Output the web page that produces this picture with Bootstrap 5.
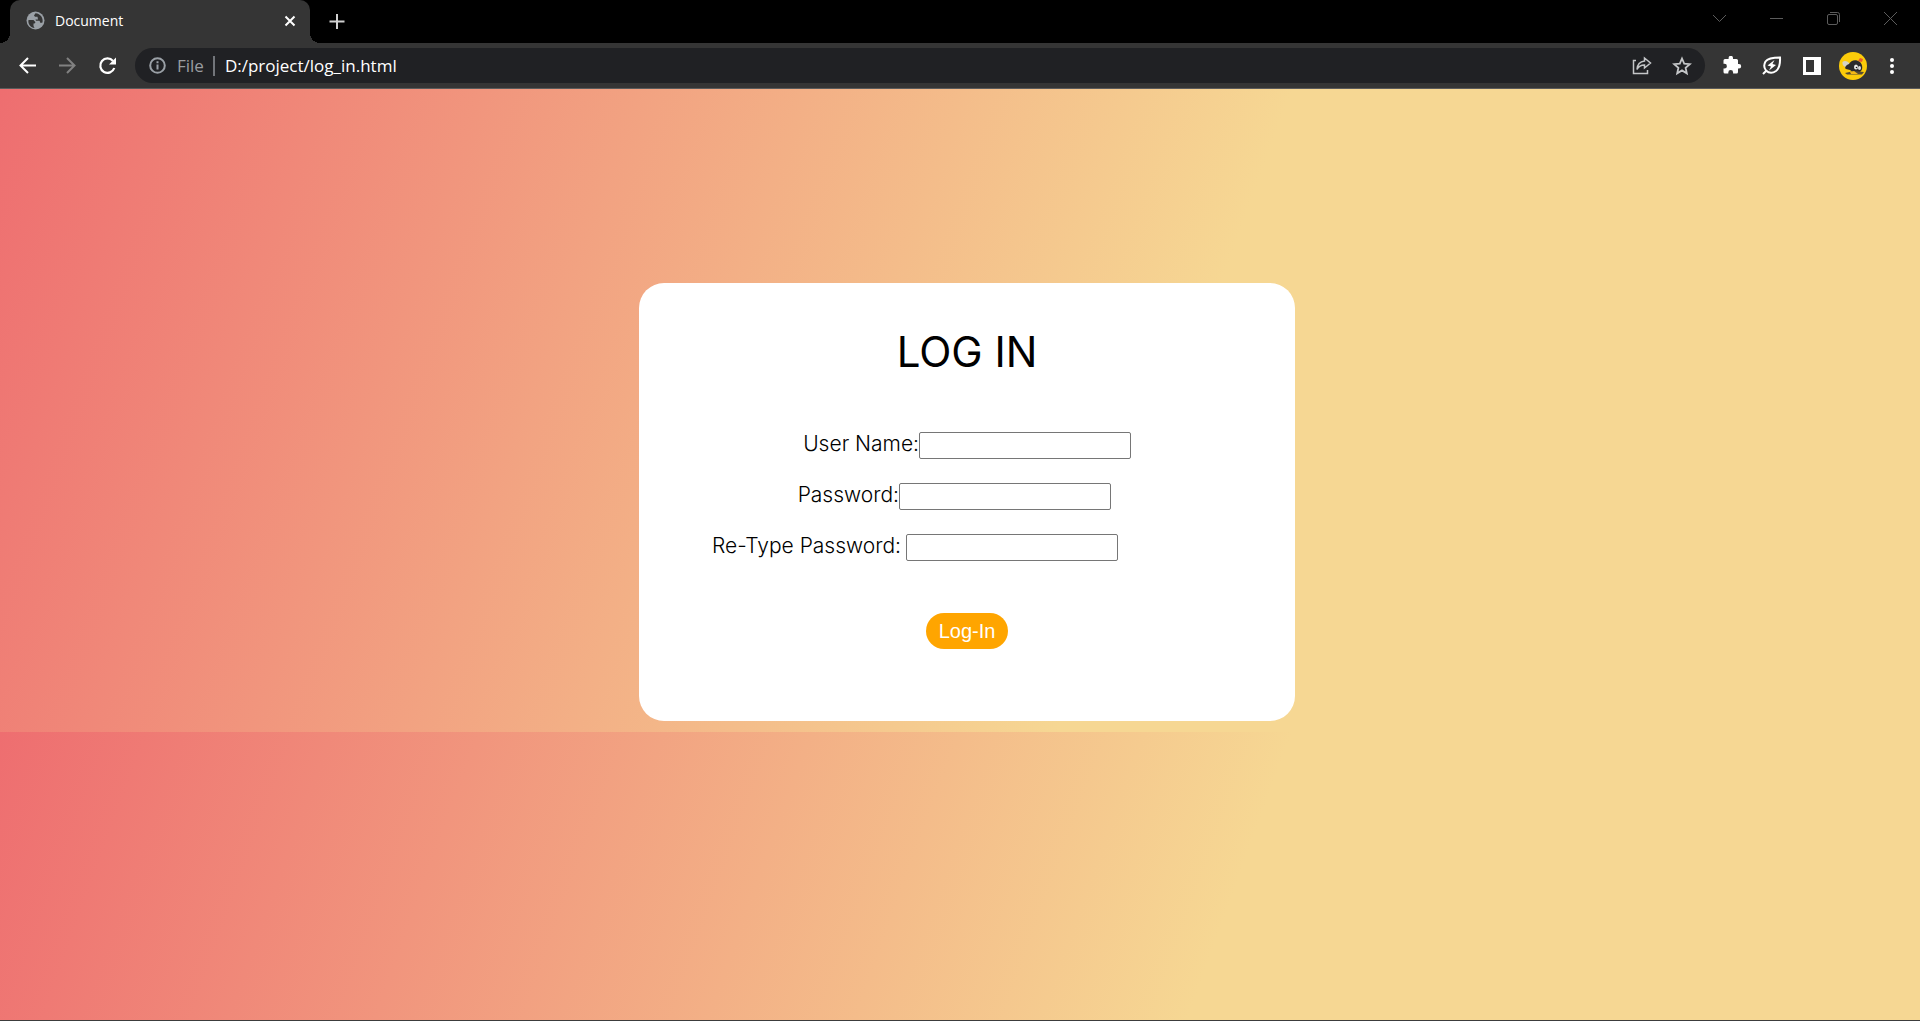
<!DOCTYPE html>
<html lang="en">
<head>
<meta charset="utf-8">
<meta name="viewport" content="width=device-width, initial-scale=1">
<title>Document</title>
<link href="https://cdn.jsdelivr.net/npm/bootstrap@5.3.0/dist/css/bootstrap.min.css" rel="stylesheet">
<style>
  body { background: #353535; font-family: "Open Sans", "Noto Sans", sans-serif; }
  svg { display: block; flex: none; }
  .bare { background: none; border: 0; padding: 0; color: inherit; }

  /* window frame */
  .tabstrip { height: 43px; background: #000; padding-left: 10px; color: #5c5c5c; }
  .page-tab { position: relative; width: 300px; background: #353535; border-radius: 10px 10px 0 0; padding: 0 13px 2px 16px; color: #fff; font-size: 14px; }
  .page-tab::before, .page-tab::after { content: ""; position: absolute; bottom: 0; width: 10px; height: 10px; }
  .page-tab::before { left: -10px; background: radial-gradient(circle at 0 0, #000 10px, #353535 10px); }
  .page-tab::after { right: -10px; background: radial-gradient(circle at 100% 0, #000 10px, #353535 10px); }
  .tab-title { margin-left: 10px; }
  .new-tab { margin-left: 18px; padding-bottom: 2px; color: #d0d0d0; }
  .window-buttons { gap: 42px; padding: 0 22px 6px 0; }
  .toolbar { height: 46px; background: #353535; border-bottom: 1px solid #5b5b5b; padding: 0 20px 0 18px; color: #fff; gap: 17px; }
  .tool-group { gap: 20px; }
  .address { height: 35px; background: #202124; border-radius: 18px; padding: 0 13px 0 14px; font-size: 17px; }
  .address .scheme { color: #9a9da0; border-right: 2px solid #72757a; margin-left: 11px; padding-right: 9px; line-height: 20px; }
  .address input { background: none; border: 0; outline: 0; color: #fff; padding: 0 10px; min-width: 0; }
  .grey { color: #c4c6c8; }

  /* page */
  .page-view { border-bottom: 1px solid #3c3c3c; padding: 194px 16px 0 30px;
    background: linear-gradient(110deg, #ee6e70 0%, #f6d793 60%) 0 0 / 100% 643px repeat-y; }
  .login-box { width: 100%; max-width: 656px; background: #fff; border-radius: 25px; padding: 44px 0 72px; color: #000; font-family: Inter, "Open Sans", sans-serif; }
  .login-box h1 { font-size: 42px; font-weight: 400; line-height: 50px; margin-bottom: 55px; }
  .login-box label { font-size: 21px; font-weight: 300; line-height: 24px; }
  .login-box form { gap: 24px; }
  .box-input { width: 212px; height: 27px; border: 1px solid #767676; border-radius: 2px; background: #fff; padding: 1px 2px; font-size: 16px; }
  .end-a { padding-right: 164px; }
  .end-b { padding-right: 184px; }
  .end-c { padding-right: 177px; gap: 5px; }
  .send { height: 36px; border: 0; border-radius: 18px; background: orange; color: #fff; font: 20px/24px "Liberation Sans", Arial, sans-serif; padding: 0 13px; margin-top: 28px; }
</style>
</head>
<body class="d-flex flex-column min-vh-100">
<header>
  <div class="tabstrip d-flex align-items-stretch">
    <div class="page-tab d-flex align-items-center">
      <svg width="19" height="19" viewBox="0 0 19 19"><circle cx="9.500" cy="9.500" r="9" fill="#9aa0a6"/><path d="M2.500 9h5l2 2.200-1 1.300h-1v2.500l1 2C5 17 1.600 13 2.500 9zM9.500 2.200 8 4.500l1 1.300h2.500L12 8.500H9.500l.5 1.300h3.500L14.500 12l2-.5C17.500 7 14.500 2.500 9.500 2.200z" fill="#353535"/></svg>
      <span class="tab-title flex-grow-1">Document</span>
      <button class="bare" aria-label="Close tab"><svg width="14" height="14" viewBox="0 0 14 14" stroke="#fff" stroke-width="2"><path d="M2.500 2.500l9 9m0-9l-9 9"/></svg></button>
    </div>
    <button class="bare new-tab" aria-label="New tab"><svg width="18" height="18" viewBox="0 0 18 18" stroke="currentColor" stroke-width="2"><path d="M9 2v15M1.500 9.500h15"/></svg></button>
    <div class="window-buttons d-flex align-items-center ms-auto">
      <button class="bare" aria-label="Search tabs"><svg width="15" height="15" viewBox="0 0 15 15" fill="none" stroke="currentColor"><path d="M1 4l6.500 6.500L14 4"/></svg></button>
      <button class="bare" aria-label="Minimize"><svg width="15" height="15" viewBox="0 0 15 15" stroke="currentColor"><path d="M1 7.500h13"/></svg></button>
      <button class="bare" aria-label="Restore"><svg width="15" height="15" viewBox="0 0 15 15" fill="none" stroke="currentColor"><rect x="1.500" y="3.500" width="10" height="10" rx="1.500"/><path d="M4 1.500h7.500a2 2 0 0 1 2 2V11"/></svg></button>
      <button class="bare" aria-label="Close"><svg width="15" height="15" viewBox="0 0 15 15" stroke="currentColor"><path d="M1 1l13 13M14 1L1 14"/></svg></button>
    </div>
  </div>
  <div class="toolbar d-flex align-items-center">
    <div class="tool-group d-flex align-items-center">
      <button class="bare" aria-label="Back"><svg width="20" height="20" viewBox="0 0 20 20" fill="none" stroke="#fff" stroke-width="2"><path d="M18 9.500H3m7-7.500L2.500 9.500 10 17"/></svg></button>
      <button class="bare" aria-label="Forward"><svg width="20" height="20" viewBox="0 0 20 20" fill="none" stroke="#818181" stroke-width="2"><path d="M1 9.500h15M9 2l7.500 7.500L9 17"/></svg></button>
      <button class="bare" aria-label="Reload"><svg width="20" height="20" viewBox="0 0 20 20" fill="none" stroke="#fff" stroke-width="2.200"><path d="M15 5A7.200 7.200 0 1 0 16.300 12"/><path d="M18 1.500v7h-7z" fill="#fff" stroke="none"/></svg></button>
    </div>
    <div class="address d-flex align-items-center flex-grow-1">
      <svg width="17" height="17" viewBox="0 0 17 17" fill="none" stroke="#9aa0a6" stroke-width="2"><circle cx="8.500" cy="8.500" r="7.300"/><path d="M8.500 7.500v5M8.500 4.200v2"/></svg>
      <span class="scheme">File</span>
      <input class="flex-grow-1" type="text" aria-label="Address" value="D:/project/log_in.html">
      <div class="tool-group d-flex">
        <button class="bare grey" aria-label="Share"><svg width="20" height="20" viewBox="0 0 20 20" fill="none" stroke="currentColor" stroke-width="1.500"><path d="M4 4.500H1.500v13h14V14"/><path d="M12.500 2l6 5-6 5V9C9 9 6.500 10.500 5 13.500c.3-4.500 3-8 7.500-8.500z"/></svg></button>
        <button class="bare grey" aria-label="Bookmark"><svg width="20" height="20" viewBox="0 0 20 20" fill="none" stroke="currentColor" stroke-width="1.800"><path d="M10 2.500l2.200 5.100 5.600.5-4.200 3.700 1.200 5.500-4.800-2.900-4.800 2.900 1.200-5.500-4.200-3.700 5.600-.5z"/></svg></button>
      </div>
    </div>
    <div class="tool-group d-flex align-items-center">
      <button class="bare" aria-label="Extensions"><svg width="20" height="20" viewBox="0 1 20 20" fill="#fff"><path d="M17 9h-1V5.500A1.500 1.500 0 0 0 14.500 4H11V3a2.200 2.200 0 0 0-4.400 0v1H3a1.500 1.500 0 0 0-1.500 1.500v3.300h1a2.400 2.400 0 0 1 0 4.800h-1v3.400A1.500 1.500 0 0 0 3 18.500h3.300v-1a2.400 2.400 0 0 1 4.800 0v1h3.400A1.500 1.500 0 0 0 16 17v-3.600h1A2.200 2.200 0 0 0 17 9z"/></svg></button>
      <button class="bare" aria-label="Energy saver"><svg width="20" height="20" viewBox="0 1 20 20" fill="none" stroke="#fff" stroke-width="2"><path d="M18 2.500c-7 0-12 .5-14.500 4C1.500 10 2 13 4 15.500c3 2.800 7 2.500 10 .5 4-3 4.300-7.500 4-13.500zM4.500 15.500L1 19"/><path d="M12.500 5L5.500 10.500l3.500 1-2 4 7-5.500-3.500-1z" fill="#fff" stroke="none"/></svg></button>
      <button class="bare" aria-label="Side panel"><svg width="20" height="20" viewBox="0 0 20 20"><path d="M1 1h18v18H1zM4 4v12h8V4z" fill="#fff" fill-rule="evenodd"/></svg></button>
    </div>
    <button class="bare" aria-label="Profile"><svg width="28" height="28" viewBox="0 0 28 28"><circle cx="14" cy="14" r="14" fill="#fbcb0a"/><path d="M3.500 10c2-2 5-1 6.500 1l1 3-3 1c-3 0-5-2-4.500-5z" fill="#d5d3c5"/><path d="M10 12c2-4 7-5 11-2 3 3 3 8 0 10-4 1-8 0-10-2l-4-1c-2-1 0-4 3-5z" fill="#2b2a2c"/><path d="M19 9l2-3 3 1-1 3z" fill="#e9582e"/><ellipse cx="17" cy="15" rx="2" ry="2.500" fill="#eee"/><ellipse cx="20.500" cy="16" rx="1.500" ry="2" fill="#ddd"/><path d="M6 21l9-2 10 1-2 2.500H8z" fill="#554b35"/><path d="M11 20l4-1 4 3h-7z" fill="#f4b916"/><circle cx="17.500" cy="15.500" r=".8" fill="#111"/></svg></button>
    <button class="bare" aria-label="Menu"><svg width="16" height="18" viewBox="0 0 16 18" fill="#fff"><circle cx="8" cy="3" r="2"/><circle cx="8" cy="9" r="2"/><circle cx="8" cy="15" r="2"/></svg></button>
  </div>
</header>
<main class="page-view flex-grow-1">
  <section class="login-box mx-auto">
    <h1 class="text-center">LOG IN</h1>
    <form class="d-flex flex-column">
      <div class="end-a d-flex justify-content-end"><label for="user">User Name:</label><input class="box-input" id="user" type="text"></div>
      <div class="end-b d-flex justify-content-end"><label for="pass">Password:</label><input class="box-input" id="pass" type="password"></div>
      <div class="end-c d-flex justify-content-end"><label for="again">Re-Type Password:</label><input class="box-input" id="again" type="password"></div>
      <button class="send align-self-center" type="button">Log-In</button>
    </form>
  </section>
</main>
<script src="https://cdn.jsdelivr.net/npm/bootstrap@5.3.0/dist/js/bootstrap.bundle.min.js"></script>
</body>
</html>
